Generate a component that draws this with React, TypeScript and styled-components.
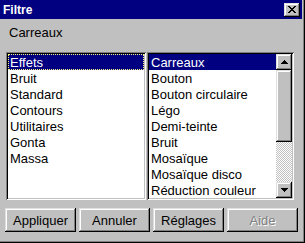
import styled, { createGlobalStyle } from 'styled-components';

const GlobalStyle = createGlobalStyle`
  html, body {
    margin: 0;
    padding: 0;
    background: #c0c0c0;
  }
  body {
    font-family: "Liberation Sans", Arial, sans-serif;
    font-size: 13px;
    color: #000;
  }
`;

const Window = styled.div`
  width: 305px;
  height: 243px;
  box-sizing: border-box;
  padding: 0 3px 3px 0;
  background: #c0c0c0;
  box-shadow: inset -1px -1px #000, inset -2px -2px #808080;
  display: flex;
  flex-direction: column;
`;

const TitleBar = styled.div`
  height: 19px;
  background: #000080;
  color: #fff;
  display: flex;
  align-items: center;
  justify-content: space-between;
  padding: 0 2px 0 3px;
`;

const Title = styled.span`
  font-weight: bold;
  font-size: 12px;
`;

const raised = `
  background: #c0c0c0;
  box-shadow: inset -1px -1px #000, inset 1px 1px #dfdfdf,
    inset -2px -2px #808080, inset 2px 2px #fff;
`;

const CloseButton = styled.div`
  width: 16px;
  height: 14px;
  ${raised}
  display: flex;
  align-items: center;
  justify-content: center;
`;

const Label = styled.div`
  margin-top: 6px;
  padding-left: 9px;
  height: 16px;
  line-height: 16px;
`;

const ListsRow = styled.div`
  display: flex;
  gap: 1px;
  margin-top: 11px;
  padding-left: 6px;
`;

const ListBox = styled.div<{ $w: number }>`
  width: ${(p) => p.$w}px;
  height: 148px;
  box-sizing: border-box;
  padding: 2px;
  background: #fff;
  box-shadow: inset 1px 1px #808080, inset -1px -1px #fff,
    inset 2px 2px #000, inset -2px -2px #c0c0c0;
  display: flex;
`;

const Items = styled.div`
  flex: 1;
  overflow: hidden;
`;

const Item = styled.div<{ $sel?: boolean; $focus?: boolean }>`
  height: 16px;
  line-height: 17px;
  padding-left: 2px;
  white-space: nowrap;
  background: ${(p) => (p.$sel ? '#000080' : 'transparent')};
  color: ${(p) => (p.$sel ? '#fff' : '#000')};
  outline: ${(p) => (p.$focus ? '1px dotted #ffff80' : 'none')};
  outline-offset: -1px;
`;

const ScrollBar = styled.div`
  width: 16px;
  display: flex;
  flex-direction: column;
`;

const ArrowButton = styled.div`
  width: 16px;
  height: 16px;
  ${raised}
  display: flex;
  align-items: center;
  justify-content: center;
`;

const Thumb = styled.div`
  height: 72px;
  ${raised}
`;

const Track = styled.div`
  flex: 1;
  background-color: #c0c0c0;
  background-image: conic-gradient(#fff 25%, transparent 0 50%, #fff 0 75%, transparent 0);
  background-size: 2px 2px;
`;

const ButtonRow = styled.div`
  display: flex;
  gap: 3px;
  margin-top: 8px;
  padding-left: 5px;
`;

const Button = styled.div<{ $disabled?: boolean }>`
  width: 71px;
  height: 24px;
  ${raised}
  display: flex;
  align-items: center;
  justify-content: center;
  color: ${(p) => (p.$disabled ? '#808080' : '#000')};
  text-shadow: ${(p) => (p.$disabled ? '1px 1px #fff' : 'none')};
`;

const CloseIcon = () => (
  <svg width="8" height="7" viewBox="0 0 8 7" shapeRendering="crispEdges">
    <path
      fill="#000"
      d="M0 0h2v1h-2zM6 0h2v1h-2zM1 1h2v1h-2zM5 1h2v1h-2zM2 2h4v1h-4zM3 3h2v1h-2zM2 4h4v1h-4zM1 5h2v1h-2zM5 5h2v1h-2zM0 6h2v1h-2zM6 6h2v1h-2z"
    />
  </svg>
);

const Arrow = ({ down }: { down?: boolean }) => (
  <svg
    width="7"
    height="4"
    viewBox="0 0 7 4"
    shapeRendering="crispEdges"
    style={down ? { transform: 'scaleY(-1)' } : undefined}
  >
    <path fill="#000" d="M3 0h1v1h-1zM2 1h3v1h-3zM1 2h5v1h-5zM0 3h7v1h-7z" />
  </svg>
);

const CATEGORIES = ['Effets', 'Bruit', 'Standard', 'Contours', 'Utilitaires', 'Gonta', 'Massa'];
const FILTERS = [
  'Carreaux',
  'Bouton',
  'Bouton circulaire',
  'Légo',
  'Demi-teinte',
  'Bruit',
  'Mosaïque',
  'Mosaïque disco',
  'Réduction couleur',
];

export default function App() {
  return (
    <>
      <GlobalStyle />
      <Window>
        <TitleBar>
          <Title>Filtre</Title>
          <CloseButton>
            <CloseIcon />
          </CloseButton>
        </TitleBar>
        <Label>Carreaux</Label>
        <ListsRow>
          <ListBox $w={140}>
            <Items>
              {CATEGORIES.map((c, i) => (
                <Item key={c} $sel={i === 0} $focus={i === 0}>
                  {c}
                </Item>
              ))}
            </Items>
          </ListBox>
          <ListBox $w={147}>
            <Items>
              {FILTERS.map((f, i) => (
                <Item key={i} $sel={i === 0}>
                  {f}
                </Item>
              ))}
            </Items>
            <ScrollBar>
              <ArrowButton>
                <Arrow />
              </ArrowButton>
              <Thumb />
              <Track />
              <ArrowButton>
                <Arrow down />
              </ArrowButton>
            </ScrollBar>
          </ListBox>
        </ListsRow>
        <ButtonRow>
          <Button>Appliquer</Button>
          <Button>Annuler</Button>
          <Button>Réglages</Button>
          <Button $disabled>Aide</Button>
        </ButtonRow>
      </Window>
    </>
  );
}
